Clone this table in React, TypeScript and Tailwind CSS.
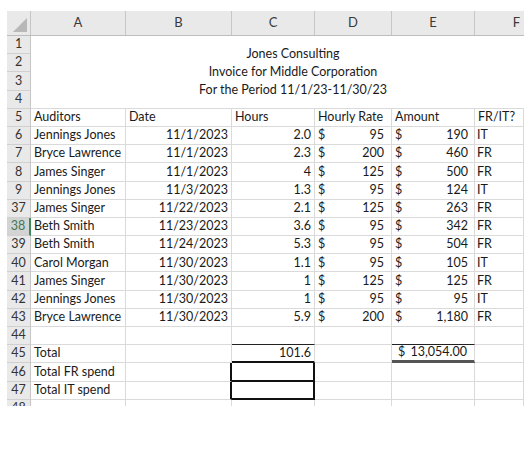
import React from "react";

type Row = {
  n: string;
  a?: string;
  b?: string;
  c?: string;
  d?: string;
  e?: string;
  f?: string;
};

const rows: Row[] = [
  { n: "6", a: "Jennings Jones", b: "11/1/2023", c: "2.0", d: "95", e: "190", f: "IT" },
  { n: "7", a: "Bryce Lawrence", b: "11/1/2023", c: "2.3", d: "200", e: "460", f: "FR" },
  { n: "8", a: "James Singer", b: "11/1/2023", c: "4", d: "125", e: "500", f: "FR" },
  { n: "9", a: "Jennings Jones", b: "11/3/2023", c: "1.3", d: "95", e: "124", f: "IT" },
  { n: "37", a: "James Singer", b: "11/22/2023", c: "2.1", d: "125", e: "263", f: "FR" },
  { n: "38", a: "Beth Smith", b: "11/23/2023", c: "3.6", d: "95", e: "342", f: "FR" },
  { n: "39", a: "Beth Smith", b: "11/24/2023", c: "5.3", d: "95", e: "504", f: "FR" },
  { n: "40", a: "Carol Morgan", b: "11/30/2023", c: "1.1", d: "95", e: "105", f: "IT" },
  { n: "41", a: "James Singer", b: "11/30/2023", c: "1", d: "125", e: "125", f: "FR" },
  { n: "42", a: "Jennings Jones", b: "11/30/2023", c: "1", d: "95", e: "95", f: "IT" },
  { n: "43", a: "Bryce Lawrence", b: "11/30/2023", c: "5.9", d: "200", e: "1,180", f: "FR" },
];

const cell = "h-full border-r border-b border-[#dadada] flex items-center overflow-hidden whitespace-nowrap";

const RowHead = ({ n, selected }: { n: string; selected?: boolean }) => (
  <div
    className={`w-[24px] h-full flex items-center justify-center border-b border-[#d0d0d0] ${
      selected ? "bg-[#d3d3d3] text-[#3d7a55] border-r-2 border-r-[#3d8a5a]" : "bg-[#e9e9e9] text-[#333] border-r border-r-[#c6c6c6]"
    }`}
  >
    {n}
  </div>
);

export default function App() {
  return (
    <div
      className="w-[532px] h-[450px] bg-white pt-[11px] pl-[7px] text-[12.5px] text-[#1a1a1a]"
      style={{ fontFamily: "Lato, 'Open Sans', sans-serif" }}
    >
      {/* column headers */}
      <div className="flex h-[25px] bg-[#e9e9e9] text-[#3a3a3a] text-[13px] w-[517px] border-b border-[#bdbdbd]">
        <div className="w-[24px] h-full relative border-r border-[#c6c6c6]">
          <div className="absolute right-[3px] bottom-[3px] w-0 h-0 border-l-[14px] border-l-transparent border-b-[14px] border-b-[#b8b8b8]" />
        </div>
        <div className="w-[95px] flex items-center justify-center border-r border-[#c6c6c6]">A</div>
        <div className="w-[106px] flex items-center justify-center border-r border-[#c6c6c6]">B</div>
        <div className="w-[83px] flex items-center justify-center border-r border-[#c6c6c6]">C</div>
        <div className="w-[77px] flex items-center justify-center border-r border-[#c6c6c6]">D</div>
        <div className="w-[83px] flex items-center justify-center border-r border-[#c6c6c6]">E</div>
        <div className="w-[49px] flex items-center justify-end pr-[4px]">F</div>
      </div>

      {/* title block rows 1-4 */}
      <div className="flex h-[72.8px] w-[517px]">
        <div className="flex flex-col w-[24px]">
          {["1", "2", "3", "4"].map((n) => (
            <div key={n} className="h-[18.2px]">
              <RowHead n={n} />
            </div>
          ))}
        </div>
        <div className="w-[493px] h-full border-b border-[#dadada] flex flex-col items-center justify-center pl-[31px] leading-[18.2px]">
          <div>Jones Consulting</div>
          <div>Invoice for Middle Corporation</div>
          <div>For the Period 11/1/23-11/30/23</div>
        </div>
      </div>

      {/* header row 5 */}
      <div className="flex h-[18.2px] w-[517px]">
        <RowHead n="5" />
        <div className={`${cell} w-[95px] pl-[3px]`}>Auditors</div>
        <div className={`${cell} w-[106px] pl-[3px]`}>Date</div>
        <div className={`${cell} w-[83px] pl-[3px]`}>Hours</div>
        <div className={`${cell} w-[77px] pl-[3px]`}>Hourly Rate</div>
        <div className={`${cell} w-[83px] pl-[3px]`}>Amount</div>
        <div className={`${cell} w-[49px] pl-[3px]`}>FR/IT?</div>
      </div>

      {rows.map((r) => (
        <div key={r.n} className="flex h-[18.2px] w-[517px]">
          <RowHead n={r.n} selected={r.n === "38"} />
          <div className={`${cell} w-[95px] pl-[3px]`}>{r.a}</div>
          <div className={`${cell} w-[106px] justify-end pr-[3px]`}>{r.b}</div>
          <div className={`${cell} w-[83px] justify-end pr-[3px]`}>{r.c}</div>
          <div className={`${cell} w-[77px] justify-between pl-[3px] pr-[7px]`}>
            <span>$</span>
            <span>{r.d}</span>
          </div>
          <div className={`${cell} w-[83px] justify-between pl-[3px] pr-[6px]`}>
            <span>$</span>
            <span>{r.e}</span>
          </div>
          <div className={`${cell} w-[49px] pl-[2px]`}>{r.f}</div>
        </div>
      ))}

      {/* row 44 */}
      <div className="flex h-[18.2px] w-[517px]">
        <RowHead n="44" />
        <div className={`${cell} w-[95px]`} />
        <div className={`${cell} w-[106px]`} />
        <div className={`${cell} w-[83px] border-b-[#222]`} />
        <div className={`${cell} w-[77px]`} />
        <div className={`${cell} w-[83px] border-b-[#222]`} />
        <div className={`${cell} w-[49px]`} />
      </div>

      {/* row 45 */}
      <div className="flex h-[18.2px] w-[517px]">
        <RowHead n="45" />
        <div className={`${cell} w-[95px] pl-[3px]`}>Total</div>
        <div className={`${cell} w-[106px]`} />
        <div className={`${cell} w-[83px] justify-end pr-[3px] border-b-2 border-b-[#111]`}>101.6</div>
        <div className={`${cell} w-[77px]`} />
        <div className={`${cell} w-[83px] justify-between pl-[6px] pr-[7px] border-b-[3px] border-b-[#555]`}>
          <span>$</span>
          <span>13,054.00</span>
        </div>
        <div className={`${cell} w-[49px]`} />
      </div>

      {/* rows 46-47 */}
      {["46", "47"].map((n) => (
        <div key={n} className="flex h-[18.2px] w-[517px]">
          <RowHead n={n} />
          <div className={`${cell} w-[95px] pl-[3px]`}>{n === "46" ? "Total FR spend" : "Total IT spend"}</div>
          <div className={`${cell} w-[106px] border-r-2 border-r-[#111]`} />
          <div className={`${cell} w-[83px] border-r-2 border-r-[#111] border-b-2 border-b-[#111]`} />
          <div className={`${cell} w-[77px]`} />
          <div className={`${cell} w-[83px]`} />
          <div className={`${cell} w-[49px]`} />
        </div>
      ))}

      {/* partial row 48 */}
      <div className="flex h-[6px] w-[517px] overflow-hidden">
        <div className="w-[24px] h-[18px] bg-[#e9e9e9] text-[#333] flex items-center justify-center border-r border-[#c6c6c6]">
          48
        </div>
        <div className="w-[95px] h-full border-r border-[#dadada]" />
        <div className="w-[106px] h-full border-r border-[#dadada]" />
        <div className="w-[83px] h-full border-r border-[#dadada]" />
        <div className="w-[77px] h-full border-r border-[#dadada]" />
        <div className="w-[83px] h-full border-r border-[#dadada]" />
        <div className="w-[49px] h-full border-r border-[#dadada]" />
      </div>
    </div>
  );
}
